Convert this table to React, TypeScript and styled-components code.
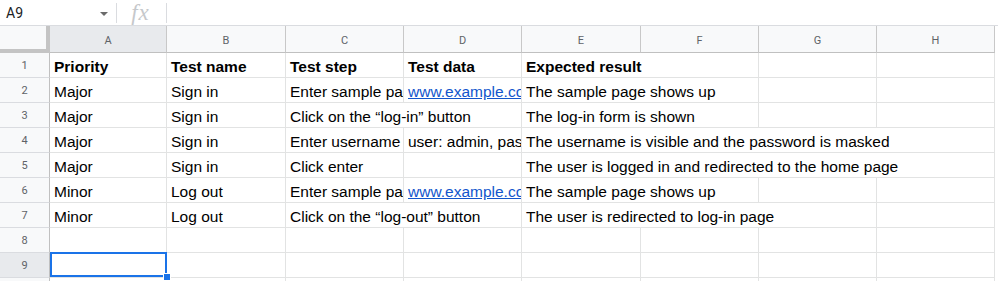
import React from "react";
import styled, { createGlobalStyle, css } from "styled-components";

const GlobalStyle = createGlobalStyle`
  html, body { margin: 0; padding: 0; background: #ffffff; overflow: hidden; }
  body { font-family: "Liberation Sans", Arial, sans-serif; }
`;

const COLS = "50px 117px 119px 118px 118px 119px 118px 118px 118px";

const Page = styled.div`
  width: 998px;
  height: 281px;
  overflow: hidden;
  background: #fff;
`;

const FormulaBar = styled.div`
  height: 25px;
  border-bottom: 1px solid #dadce0;
  display: flex;
  align-items: center;
`;

const NameBox = styled.div`
  width: 116px;
  height: 25px;
  display: flex;
  align-items: center;
  justify-content: space-between;
  padding: 0 8px 0 6px;
  box-sizing: border-box;
  font-family: Roboto, "Liberation Sans", sans-serif;
  font-size: 14px;
  color: #202124;
`;

const Caret = styled.span`
  width: 0;
  height: 0;
  border-left: 4px solid transparent;
  border-right: 4px solid transparent;
  border-top: 4px solid #6b6b6b;
  margin-top: 2px;
`;

const Divider = styled.span`
  width: 1px;
  height: 20px;
  background: #dadce0;
`;

const Fx = styled.span`
  width: 49px;
  padding-right: 2px;
  box-sizing: border-box;
  text-align: center;
  font-family: "Liberation Serif", "DejaVu Serif", serif;
  font-style: italic;
  font-size: 23px;
  color: #c6c8cb;
  line-height: 25px;
  letter-spacing: 1px;
`;

const Sheet = styled.div`
  position: relative;
`;

const Row = styled.div<{ $h: number }>`
  display: grid;
  grid-template-columns: ${COLS};
  height: ${(p) => p.$h}px;
`;

const Corner = styled.div`
  background: #f8f9fa;
  border-right: 4px solid #c4c4c4;
  border-bottom: 4px solid #c4c4c4;
  box-sizing: border-box;
`;

const ColHead = styled.div<{ $active?: boolean }>`
  background: ${(p) => (p.$active ? "#e8eaed" : "#f8f9fa")};
  border-right: 1px solid #c8c8c8;
  border-bottom: 1px solid #c0c0c0;
  box-sizing: border-box;
  display: flex;
  align-items: center;
  justify-content: center;
  font-family: Roboto, "Liberation Sans", sans-serif;
  font-size: 11px;
  color: #5f6368;
  padding-top: 2px;
`;

const RowHead = styled.div<{ $active?: boolean }>`
  background: ${(p) => (p.$active ? "#e8eaed" : "#f8f9fa")};
  border-right: 1px solid #c0c0c0;
  border-bottom: 1px solid #dadce0;
  box-sizing: border-box;
  display: flex;
  align-items: center;
  justify-content: center;
  font-family: Roboto, "Liberation Sans", sans-serif;
  font-size: 11px;
  color: #5f6368;
`;

const Cell = styled.div<{ $span?: number; $bold?: boolean; $selected?: boolean }>`
  grid-column: span ${(p) => p.$span ?? 1};
  position: relative;
  border-right: 1px solid #e2e3e3;
  border-bottom: 1px solid #e2e3e3;
  box-sizing: border-box;
  padding: 0 3px 1px 4px;
  display: flex;
  align-items: flex-end;
  white-space: nowrap;
  overflow: ${(p) => (p.$selected ? "visible" : "hidden")};
  font-size: 15.5px;
  font-weight: ${(p) => (p.$bold ? 700 : 400)};
  color: #000;
  ${(p) =>
    p.$selected &&
    css`
      z-index: 2;
      &::before {
        content: "";
        position: absolute;
        top: -1px;
        left: 0;
        right: -1px;
        bottom: 0;
        border: 2px solid #1a73e8;
        pointer-events: none;
      }
      &::after {
        content: "";
        position: absolute;
        right: -5px;
        bottom: -4px;
        width: 6px;
        height: 6px;
        background: #1a73e8;
        border: 1px solid #fff;
      }
    `}
`;

const Link = styled.span`
  color: #1155cc;
  text-decoration: underline;
`;

type CellDef = { text?: string; span?: number; bold?: boolean; link?: boolean };

const rows: CellDef[][] = [
  [
    { text: "Priority", bold: true },
    { text: "Test name", bold: true },
    { text: "Test step", bold: true },
    { text: "Test data", bold: true },
    { text: "Expected result", bold: true, span: 2 },
    {},
    {},
  ],
  [
    { text: "Major" },
    { text: "Sign in" },
    { text: "Enter sample page URL" },
    { text: "www.example.com", link: true },
    { text: "The sample page shows up", span: 2 },
    {},
    {},
  ],
  [
    { text: "Major" },
    { text: "Sign in" },
    { text: "Click on the \u201clog-in\u201d button", span: 2 },
    { text: "The log-in form is shown", span: 2 },
    {},
    {},
  ],
  [
    { text: "Major" },
    { text: "Sign in" },
    { text: "Enter username and password" },
    { text: "user: admin, password: admin123" },
    { text: "The username is visible and the password is masked", span: 4 },
  ],
  [
    { text: "Major" },
    { text: "Sign in" },
    { text: "Click enter" },
    {},
    { text: "The user is logged in and redirected to the home page", span: 4 },
  ],
  [
    { text: "Minor" },
    { text: "Log out" },
    { text: "Enter sample page URL" },
    { text: "www.example.com", link: true },
    { text: "The sample page shows up", span: 2 },
    {},
    {},
  ],
  [
    { text: "Minor" },
    { text: "Log out" },
    { text: "Click on the \u201clog-out\u201d button", span: 2 },
    { text: "The user is redirected to log-in page", span: 3 },
    {},
  ],
  [{}, {}, {}, {}, {}, {}, {}, {}],
  [{}, {}, {}, {}, {}, {}, {}, {}],
  [{}, {}, {}, {}, {}, {}, {}, {}],
];

const letters = ["A", "B", "C", "D", "E", "F", "G", "H"];

export default function App() {
  return (
    <Page>
      <GlobalStyle />
      <FormulaBar>
        <NameBox>
          <span>A9</span>
          <Caret />
        </NameBox>
        <Divider />
        <Fx>fx</Fx>
        <Divider />
      </FormulaBar>
      <Sheet>
        <Row $h={27}>
          <Corner />
          {letters.map((l) => (
            <ColHead key={l} $active={l === "A"}>
              {l}
            </ColHead>
          ))}
        </Row>
        {rows.map((cells, i) => (
          <Row key={i} $h={25}>
            <RowHead $active={i === 8}>{i + 1}</RowHead>
            {cells.map((c, j) => (
              <Cell key={j} $span={c.span} $bold={c.bold} $selected={i === 8 && j === 0}>
                {c.link ? <Link>{c.text}</Link> : c.text}
              </Cell>
            ))}
          </Row>
        ))}
      </Sheet>
    </Page>
  );
}
